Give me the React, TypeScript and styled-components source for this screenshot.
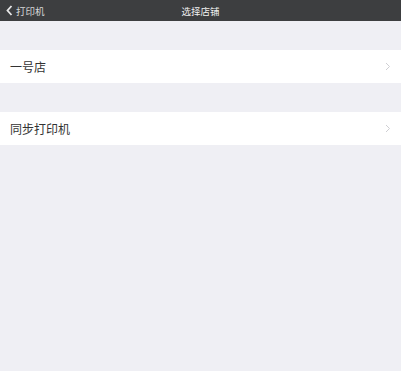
import { createGlobalStyle } from 'styled-components'
import styled from 'styled-components'

const GlobalStyle = createGlobalStyle`
  html, body {
    margin: 0;
    padding: 0;
    background: #efeff4;
    font-family: 'Noto Sans CJK SC', 'Liberation Sans', sans-serif;
  }
`

const Page = styled.div`
  width: 401px;
  height: 371px;
  background: #efeff4;
  display: flex;
  flex-direction: column;
`

const NavBar = styled.header`
  height: 21px;
  background: #3d3e40;
  display: grid;
  grid-template-columns: 1fr auto 1fr;
  align-items: center;
  padding: 0 6px;
  color: #e6e6e6;
`

const BackButton = styled.div`
  display: flex;
  align-items: center;
  gap: 3px;
  font-size: 9.5px;
  color: #d8d8d8;
`

const Title = styled.div`
  font-size: 9.5px;
  color: #f0f0f0;
`

const Section = styled.div<{ $top: number }>`
  margin-top: ${(p) => p.$top}px;
  background: #ffffff;
`

const Row = styled.div`
  height: 33px;
  display: flex;
  align-items: center;
  justify-content: space-between;
  padding: 0 10px 0 10px;
  font-size: 12px;
  color: #333333;
`

const Chevron = () => (
  <svg width="6" height="9" viewBox="0 0 6 9">
    <path d="M1 1 L4.5 4.5 L1 8" stroke="#cfcfd3" strokeWidth="1" fill="none" />
  </svg>
)

export default function App() {
  return (
    <Page>
      <GlobalStyle />
      <NavBar>
        <BackButton>
          <svg width="7" height="11" viewBox="0 0 7 11">
            <path d="M5.5 1 L1.5 5.5 L5.5 10" stroke="#e8e8e8" strokeWidth="1.8" fill="none" />
          </svg>
          打印机
        </BackButton>
        <Title>选择店铺</Title>
        <div />
      </NavBar>
      <Section $top={29}>
        <Row>
          一号店
          <Chevron />
        </Row>
      </Section>
      <Section $top={29}>
        <Row>
          同步打印机
          <Chevron />
        </Row>
      </Section>
    </Page>
  )
}
